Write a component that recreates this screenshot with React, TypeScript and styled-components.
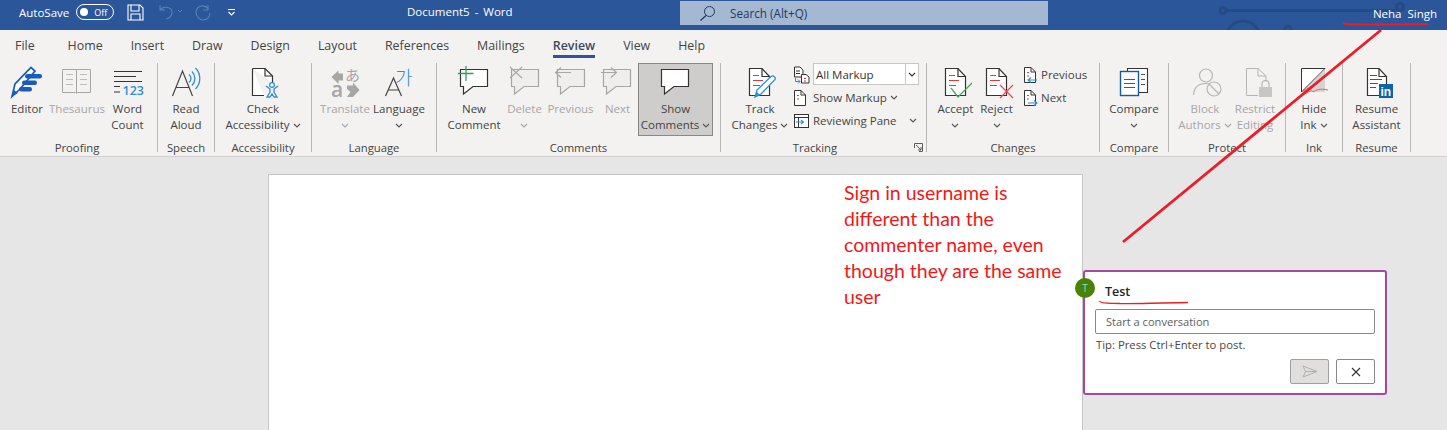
import React from "react";
import styled, { createGlobalStyle } from "styled-components";

const UI = `"Open Sans", "Noto Sans", "Liberation Sans", sans-serif`;
const INK = "#444";
const MUTED = "#a6a6a6";
const BLUE = "#2e8fd6";
const RED = "#ec1c28";

const Global = createGlobalStyle`
  html, body { margin: 0; padding: 0; background: #e6e6e6; }
  * { box-sizing: border-box; }
`;
const Shell = styled.div`
  position: relative; width: 1447px; height: 430px; overflow: hidden;
  display: flex; flex-direction: column; font-family: ${UI}; font-size: 11.5px; color: ${INK};
`;
const TitleBar = styled.header`
  height: 30px; flex: none; background: #2b579a; color: #fff; display: flex; position: relative; overflow: hidden;
`;
const Quick = styled.div`
  width: 407px; flex: none; display: flex; align-items: center; padding: 0 0 6px 19px; font-size: 11.5px;
`;
const Toggle = styled.div`
  width: 38px; height: 16px; margin-left: 7px; border: 1px solid #fff; border-radius: 8px; display: flex; align-items: center;
  padding: 0 6px 0 3px; justify-content: space-between; font-size: 9px;
  &::before { content: ""; width: 8px; height: 8px; border-radius: 50%; background: #fff; }
`;
const QuickIcon = styled.svg<{ $ml: number }>` margin-left: ${p => p.$ml}px; flex: none; `;
const DocTitle = styled.div` width: 273px; flex: none; padding-top: 4px; font-size: 11.5px; line-height: 16px; word-spacing: 2px; `;
const SearchBox = styled.div`
  width: 368px; height: 24px; margin-top: 1px; flex: none; background: #a5b8d1; color: #1f3864; display: flex; align-items: center;
  padding-left: 19px; gap: 14px; font-size: 11.7px;
`;
const UserName = styled.div`
  flex: 1; text-align: right; padding: 6px 10px 0 0; font-size: 11.5px; line-height: 16px; word-spacing: 3px; position: relative;
`;
const Circuit = styled.svg` position: absolute; left: 1200px; top: 0; `;
const Tabs = styled.nav`
  height: 30px; flex: none; background: #f3f2f1; display: flex; gap: 28px; padding: 7px 0 0 15px; font-size: 12.4px; line-height: 17px;
`;
const Tab = styled.div<{ $active?: boolean; $extra?: number }>`
  margin-right: ${p => p.$extra ?? 0}px; height: 21px; font-weight: ${p => (p.$active ? 600 : 400)};
  color: ${p => (p.$active ? "#3a4a60" : INK)}; border-bottom: ${p => (p.$active ? "3px solid #2b579a" : "none")};
`;
const Ribbon = styled.section`
  height: 97px; flex: none; background: #f3f2f1; border-bottom: 1px solid #d2d0ce; display: flex; padding-top: 3px;
`;
const Group = styled.div<{ $w: number }>`
  width: ${p => p.$w}px; flex: none; display: flex; flex-direction: column; position: relative;
`;
const Sep = styled.div` width: 1px; height: 89px; flex: none; background: #b9b7b5; `;
const GroupBody = styled.div<{ $pl?: number; $center?: boolean }>`
  height: 73px; display: flex; padding-left: ${p => p.$pl ?? 0}px; justify-content: ${p => (p.$center ? "center" : "flex-start")};
`;
const GroupLabel = styled.div<{ $pr?: number }>`
  margin-top: 4px; text-align: center; line-height: 16px; font-size: 11.3px; padding-right: ${p => p.$pr ?? 0}px;
`;
const Launcher = styled.svg` position: absolute; right: 3px; bottom: 4px; `;
const Big = styled.div<{ $w: number; $dim?: boolean; $on?: boolean; $ml?: number }>`
  width: ${p => p.$w}px; margin-left: ${p => p.$ml ?? 0}px; height: 73px; flex: none; display: flex; flex-direction: column; align-items: center;
  color: ${p => (p.$dim ? MUTED : INK)}; background: ${p => (p.$on ? "#cfcdcb" : "transparent")};
  border: ${p => (p.$on ? "1px solid #8a8886" : "none")}; padding-top: ${p => (p.$on ? 0 : 1)}px; white-space: nowrap;
`;
const IconSvg = styled.svg` flex: none; display: block; overflow: visible; `;
const Line = styled.div` height: 16px; line-height: 16px; display: flex; align-items: center; justify-content: center; gap: 3px; margin-top: 0; `;
const Lines = styled.div` padding-top: 1px; display: flex; flex-direction: column; `;
const Column = styled.div<{ $w: number; $ml: number }>` width: ${p => p.$w}px; margin-left: ${p => p.$ml}px; flex: none; display: flex; flex-direction: column; `;
const SmallRow = styled.div`
  height: 23px; display: flex; align-items: center; gap: 3px; white-space: nowrap; position: relative;
`;
const Combo = styled.div`
  width: 106px; height: 22px; background: #fff; border: 1px solid #c8c6c4; display: flex; align-items: center; padding-left: 2px; position: relative; color: #333;
  margin-top: -1px;
`;
const ComboDrop = styled.div`
  position: absolute; right: 0; top: 0; bottom: 0; width: 13px; border-left: 1px solid #c8c6c4; display: flex; align-items: center; justify-content: center;
`;
const FarChevron = styled.span` display: flex; margin-left: 9px; `;
const Main = styled.main` flex: 1; min-height: 0; display: flex; align-items: flex-start; padding: 17px 0 0 268px; `;
const Page = styled.article`
  width: 815px; height: 300px; background: #fff; border: 1px solid #c6c6c6; border-bottom: none; padding: 5px 0 0 575px; flex: none;
`;
const Note = styled.div`
  font-family: Lato, "Open Sans", "Liberation Sans", sans-serif; font-size: 19.5px; line-height: 26px; color: #f01818; white-space: nowrap;
`;
const Card = styled.aside`
  width: 304px; height: 125px; margin: 96px 0 0 0; flex: none; position: relative; background: #fff; border: 2px solid #a349a4; border-radius: 3px;
  padding: 10px 10px 0 10px; display: flex; flex-direction: column;
`;
const Avatar = styled.div`
  position: absolute; left: -10px; top: 6px; width: 20px; height: 20px; border-radius: 50%; background: #498205; color: #8fdcd6;
  font-size: 10px; line-height: 20px; text-align: center;
`;
const Author = styled.div` padding-left: 10px; font-size: 12.5px; font-weight: 600; line-height: 19px; color: #252423; `;
const Input = styled.div`
  margin-top: 8px; height: 25px; border: 1px solid #8a8886; border-radius: 2px; padding-left: 10px; line-height: 23px; font-size: 11.1px; color: #605e5c;
`;
const Tip = styled.div` margin-top: 3px; padding-left: 1px; line-height: 16px; font-size: 11.3px; color: #484644; `;
const Actions = styled.div` margin-top: 6px; display: flex; justify-content: flex-end; gap: 7px; `;
const ActionButton = styled.div<{ $off?: boolean }>`
  width: 39px; height: 25px; border: 1px solid ${p => (p.$off ? "#a19f9d" : "#8a8886")}; border-radius: 2px;
  background: ${p => (p.$off ? "#e1dfdd" : "#fff")}; display: flex; align-items: center; justify-content: center;
`;
const Ink = styled.svg` position: absolute; left: 0; top: 0; pointer-events: none; `;

const Chevron = ({ c = "#555" }: { c?: string }) => (
  <svg width="8" height="5" viewBox="0 0 8 5"><path d="M1 1l3 3 3-3" fill="none" stroke={c} strokeWidth="1.1" /></svg>
);

const Ico = ({ x, w, children }: { x: number; w: number; children: React.ReactNode }) => (
  <IconSvg viewBox={`${x} 64 ${w} 36`} width={w} height={36}>{children}</IconSvg>
);

const Doc = ({ x, stroke = "#333", r = 21, b = 96, fill = "#fff" }: { x: number; stroke?: string; r?: number; b?: number; fill?: string }) => (
  <>
    <path d={`M${x + .5} 68.5H${x + r - 8}L${x + r - .5} 76.5V${b - .5}H${x + .5}Z`} fill={fill} stroke={stroke} strokeWidth="1.2" />
    <path d={`M${x + r - 8} 68.5V76.5H${x + r - .5}`} fill="none" stroke={stroke} strokeWidth="1.2" />
  </>
);
const RedLines = ({ x }: { x: number }) => (
  <path d={`M${x + 4} 75.5h6M${x + 4} 80.5h10M${x + 4} 85.5h7`} stroke="#e0393e" strokeWidth="1.2" />
);
const Bubble = ({ x, stroke, fill }: { x: number; stroke: string; fill: string }) => (
  <path d={`M${x + .5} 69.5H${x + 27.5}V86.5H${x + 13}L${x + 3.5} 94V86.5H${x + .5}Z`} fill={fill} stroke={stroke} strokeWidth="1.2" />
);
const BigLabel = ({ a, b, chev, dim }: { a: string; b?: string; chev?: boolean; dim?: boolean }) => (
  <Lines>
    <Line>{a}</Line>
    <Line>{b}{chev && <Chevron c={dim ? MUTED : "#555"} />}</Line>
  </Lines>
);
const MiniDoc = ({ children, w = 15 }: { children?: React.ReactNode; w?: number }) => (
  <svg width={w} height="18" viewBox={`0 0 ${w} 18`} style={{ flex: "none" }}>
    <path d="M1.5 1.5H8L12.5 6V16.5H1.5Z" fill="#fff" stroke="#333" />
    <path d="M8 1.5V6H12.5" fill="none" stroke="#333" />
    <path d="M4 6.5h2M4 10h2" stroke="#e0393e" />
    {children}
  </svg>
);

export default function App() {
  return (
    <Shell>
      <Global />
      <TitleBar>
        <Quick>
          <span>AutoSave</span>
          <Toggle>Off</Toggle>
          <QuickIcon $ml={13} width="17" height="17" viewBox="0 0 17 17">
            <path d="M1 1H13L16 4V16H1Z M4 1V7H12V1 M4 16V10H13V16" fill="none" stroke="#fff" strokeWidth="1.1" />
          </QuickIcon>
          <QuickIcon $ml={13} width="26" height="17" viewBox="0 0 26 17">
            <path d="M3 1V6H8M3 6C6 2 14 2 15 8C15 11 13 14 9 15" fill="none" stroke="#5a80b8" strokeWidth="1.1" />
            <path d="M21 6l2 2 2-2" fill="none" stroke="#5a80b8" />
          </QuickIcon>
          <QuickIcon $ml={11} width="18" height="18" viewBox="0 0 18 18">
            <path d="M14 2V7H9M14 6C11 1 3 2 2 9C2 14 6 17 9 17C13 17 16 14 16 10" fill="none" stroke="#5a80b8" strokeWidth="1.1" />
          </QuickIcon>
          <QuickIcon $ml={15} width="10" height="9" viewBox="0 0 10 9">
            <path d="M1 1.5H8M1.5 4l3 3 3-3" fill="none" stroke="#fff" strokeWidth="1.1" />
          </QuickIcon>
        </Quick>
        <DocTitle>Document5 - Word</DocTitle>
        <SearchBox>
          <svg width="17" height="17" viewBox="0 0 17 17">
            <circle cx="10.5" cy="6.5" r="5" fill="none" stroke="#1f3864" />
            <path d="M7 10.5L1.5 15.5" stroke="#1f3864" strokeWidth="1.2" />
          </svg>
          <span>Search (Alt+Q)</span>
        </SearchBox>
        <Circuit width="247" height="30" viewBox="0 0 247 30">
          <g fill="none" stroke="#244b86" strokeWidth="3">
            <circle cx="23" cy="10.5" r="3" />
            <path d="M26 10.5H195" />
            <circle cx="200" cy="7" r="3.5" />
            <circle cx="43" cy="38" r="17" />
            <path d="M30 38H56" />
            <circle cx="88" cy="29" r="3" />
          </g>
        </Circuit>
        <UserName>Neha Singh</UserName>
      </TitleBar>
      <Tabs>
        <Tab $extra={5}>File</Tab>
        {["Home", "Insert", "Draw", "Design", "Layout", "References", "Mailings"].map(t => <Tab key={t}>{t}</Tab>)}
        <Tab $active>Review</Tab>
        <Tab>View</Tab>
        <Tab>Help</Tab>
      </Tabs>
      <Ribbon>
        <Group $w={157}>
          <GroupBody $pl={4}>
            <Big $w={46}>
              <Ico x={4} w={46}>
                <path d="M12 96.5L15 84L31 67.5L35 71L20 89L12 96.5Z" fill="#fff" stroke="#185abd" strokeWidth="1.7" />
                <path d="M12 96.5L14 90L18 93Z" fill="#185abd" />
                <rect x="25" y="74" width="17" height="4.5" rx="2.2" fill="#185abd" />
                <rect x="22" y="80.5" width="15" height="4.5" rx="2.2" fill="#185abd" />
                <rect x="19" y="87" width="13" height="4.5" rx="2.2" fill="#185abd" />
              </Ico>
              <BigLabel a="Editor" />
            </Big>
            <Big $w={54} $dim>
              <Ico x={50} w={54}>
                <path d="M62.5 69.5H76.5L77 70H76.5V92.5L76 93L75.5 92.5H62.5ZM76.5 69.5H90.5V92.5H77.5L76.5 93.5Z" fill="#f3f2f1" stroke="#a6a6a6" />
                <path d="M66 74.5h7M66 79.5h7M66 84.5h7M80 74.5h7M80 79.5h7M80 84.5h7" stroke="#bdbdbd" />
              </Ico>
              <BigLabel a="Thesaurus" />
            </Big>
            <Big $w={47}>
              <Ico x={104} w={47}>
                <path d="M114 71.5h28M114 76.5h22M114 81.5h28" stroke="#333" strokeWidth="1" />
                <path d="M114 86.5h6M114 92h6" stroke="#333" strokeWidth="1" />
                <text x="122.5" y="95" fontSize="12.5" fill={BLUE} fontFamily="Open Sans" fontWeight="600">123</text>
              </Ico>
              <BigLabel a="Word" b="Count" />
            </Big>
          </GroupBody>
          <GroupLabel $pr={3}>Proofing</GroupLabel>
        </Group>
        <Sep />
        <Group $w={56}>
          <GroupBody $center>
            <Big $w={56}>
              <Ico x={158} w={56}>
                <path d="M172.5 96L182.5 71L192.5 96M176 87.5H189" fill="none" stroke="#444" strokeWidth="1.2" />
                <path d="M189 74.5a5 5 0 0 1 0 8M192 71.5a10 10 0 0 1 0 14M195.5 68a15 15 0 0 1 0 21" fill="none" stroke={BLUE} strokeWidth="1.3" />
              </Ico>
              <BigLabel a="Read" b="Aloud" />
            </Big>
          </GroupBody>
          <GroupLabel>Speech</GroupLabel>
        </Group>
        <Sep />
        <Group $w={96}>
          <GroupBody $center>
            <Big $w={96}>
              <Ico x={215} w={96}>
                <path d="M252.5 68.5H265L272.5 76V83M264 95.5H252.5V68.5" fill="#fff" stroke="#333" strokeWidth="1.2" />
                <path d="M265 68.5V76H272.5" fill="none" stroke="#333" strokeWidth="1.2" />
                <circle cx="272" cy="85" r="2.4" fill="none" stroke={BLUE} strokeWidth="1.2" />
                <path d="M266 86L270 89V92L267 97H270L272 94L274 97H277L274 92V89L278 86" fill="none" stroke={BLUE} strokeWidth="1.3" />
              </Ico>
              <BigLabel a="Check" b="Accessibility" chev />
            </Big>
          </GroupBody>
          <GroupLabel>Accessibility</GroupLabel>
        </Group>
        <Sep />
        <Group $w={124}>
          <GroupBody $pl={8}>
            <Big $w={50} $dim>
              <Ico x={320} w={50}>
                <path d="M343 73.5V80.5H338.5V84L331.5 77L338.5 70.5V73.5Z" fill="#a6a6a6" />
                <text x="345" y="81" fontSize="15" fill="#a6a6a6" fontFamily="Noto Sans CJK JP">あ</text>
                <text x="331" y="96.5" fontSize="21" fontWeight="600" fill="#a6a6a6" fontFamily="Open Sans">a</text>
                <path d="M347 85.5H353V82.5L359.5 90L353 97H347L350.5 92L347 89Z" fill="#a6a6a6" />
              </Ico>
              <BigLabel a="Translate" b="" chev dim />
            </Big>
            <Big $w={58}>
              <Ico x={371} w={58}>
                <path d="M386.5 96L394.5 78L402.5 96M389.5 90H399.5" fill="none" stroke="#444" strokeWidth="1.2" />
                <text x="396" y="85" fontSize="19" fill={BLUE} fontFamily="Noto Sans CJK KR" fontWeight="300">가</text>
              </Ico>
              <BigLabel a="Language" b="" chev />
            </Big>
          </GroupBody>
          <GroupLabel>Language</GroupLabel>
        </Group>
        <Sep />
        <Group $w={283}>
          <GroupBody $pl={12}>
            <Big $w={50}>
              <Ico x={449} w={50}>
                <Bubble x={460} stroke="#333" fill="#fff" />
                <path d="M466 66V81M458 73.5H473.5" stroke="#2f9e5b" strokeWidth="1.3" />
              </Ico>
              <BigLabel a="New" b="Comment" />
            </Big>
            <Big $w={51} $dim>
              <Ico x={499} w={51}>
                <Bubble x={511} stroke="#a6a6a6" fill="#efeeed" />
                <path d="M510 67L522 78M522 67L510 78" stroke="#a6a6a6" strokeWidth="1.1" />
              </Ico>
              <BigLabel a="Delete" b="" chev dim />
            </Big>
            <Big $w={41} $dim>
              <Ico x={550} w={41}>
                <Bubble x={557} stroke="#a6a6a6" fill="#efeeed" />
                <path d="M556 72.5H571M561 67.5L555.5 72.5L561 77.5" fill="none" stroke="#a6a6a6" strokeWidth="1.1" />
              </Ico>
              <BigLabel a="Previous" />
            </Big>
            <Big $w={41} $ml={6} $dim>
              <Ico x={597} w={41}>
                <Bubble x={603} stroke="#a6a6a6" fill="#efeeed" />
                <path d="M601 72.5H616M611 67.5L616.5 72.5L611 77.5" fill="none" stroke="#a6a6a6" strokeWidth="1.1" />
              </Ico>
              <BigLabel a="Next" />
            </Big>
            <Big $w={75} $on>
              <Ico x={639} w={73}>
                <Bubble x={661} stroke="#333" fill="#fff" />
              </Ico>
              <BigLabel a="Show" b="Comments" chev />
            </Big>
          </GroupBody>
          <GroupLabel>Comments</GroupLabel>
        </Group>
        <Sep />
        <Group $w={205}>
          <GroupBody $pl={8}>
            <Big $w={62}>
              <Ico x={729} w={62}>
                <Doc x={749} />
                <RedLines x={749} />
                <path d="M755 97L757 90L771 76.5C773 75 776 77 775 79.5L761 94Z" fill="#fff" stroke={BLUE} strokeWidth="1.3" />
                <path d="M755 97L756.5 91.5L760 95Z" fill={BLUE} />
              </Ico>
              <BigLabel a="Track" b="Changes" chev />
            </Big>
            <Column $w={132} $ml={2}>
              <SmallRow>
                <svg width="17" height="18" viewBox="0 0 17 18" style={{ flex: "none" }}>
                  <path d="M1.5 1H7L10 4V11H1.5Z" fill="#fff" stroke="#333" />
                  <path d="M3 5h4M3 7.5h4" stroke="#333" />
                  <path d="M8.5 8.5H13L16 11V17H8.5Z" fill="#fff" stroke="#333" />
                  <path d="M11 12.5h2M11 15h2" stroke="#e0393e" />
                  <path d="M2.5 12V15.5H7M5 13.5l2 2-2 2" fill="none" stroke={BLUE} />
                </svg>
                <Combo>All Markup<ComboDrop><Chevron c="#333" /></ComboDrop></Combo>
              </SmallRow>
              <SmallRow>
                <MiniDoc w={17} />
                <span>Show Markup</span>
                <Chevron />
              </SmallRow>
              <SmallRow>
                <svg width="17" height="16" viewBox="0 0 17 16" style={{ flex: "none" }}>
                  <rect x="1.5" y="1.5" width="14" height="13" fill="#fff" stroke="#333" />
                  <path d="M1.5 4.5h14M5.5 4.5v10" stroke="#333" />
                  <path d="M3 9h7M8 7l2.5 2L8 11" fill="none" stroke={BLUE} strokeWidth="1.1" />
                </svg>
                <span>Reviewing Pane</span>
                <FarChevron><Chevron /></FarChevron>
              </SmallRow>
            </Column>
          </GroupBody>
          <GroupLabel $pr={17}>Tracking</GroupLabel>
          <Launcher width="9" height="9" viewBox="0 0 9 9">
            <path d="M.5 5V.5H8.5V8.5H5M2 2L7 7M7 4V7H4" fill="none" stroke="#605e5c" />
          </Launcher>
        </Group>
        <Sep />
        <Group $w={172}>
          <GroupBody $pl={8}>
            <Big $w={41}>
              <Ico x={935} w={41}>
                <Doc x={945} />
                <RedLines x={945} />
                <path d="M951 88L958 97L972 83" fill="none" stroke="#4aa564" strokeWidth="1.3" />
              </Ico>
              <BigLabel a="Accept" b="" chev />
            </Big>
            <Big $w={41}>
              <Ico x={976} w={41}>
                <Doc x={986} />
                <RedLines x={986} />
                <path d="M1000 85L1013 98M1013 85L1000 98" stroke="#ee4a4a" strokeWidth="1.3" />
              </Ico>
              <BigLabel a="Reject" b="" chev />
            </Big>
            <Column $w={68} $ml={6}>
              <SmallRow>
                <MiniDoc>
                  <path d="M5 14H14M8 11.5L5 14L8 16.5" fill="none" stroke={BLUE} strokeWidth="1.1" />
                </MiniDoc>
                <span>Previous</span>
              </SmallRow>
              <SmallRow>
                <MiniDoc>
                  <path d="M5 14H14M11 11.5L14 14L11 16.5" fill="none" stroke={BLUE} strokeWidth="1.1" />
                </MiniDoc>
                <span>Next</span>
              </SmallRow>
            </Column>
          </GroupBody>
          <GroupLabel>Changes</GroupLabel>
        </Group>
        <Sep />
        <Group $w={68}>
          <GroupBody $center>
            <Big $w={68}>
              <Ico x={1100} w={68}>
                <path d="M1127.5 68.5H1147.5V92.5H1127.5Z" fill="#fff" stroke="#333" strokeWidth="1.1" />
                <path d="M1141 74.5h4M1141 79.5h4M1141 84.5h4" stroke="#555" />
                <rect x="1120.5" y="71.5" width="18" height="24" fill="#fff" stroke="#185a9d" strokeWidth="1.4" />
                <path d="M1124 79.5h11M1124 83.5h11M1124 87.5h11" stroke="#555" />
              </Ico>
              <BigLabel a="Compare" b="" chev />
            </Big>
          </GroupBody>
          <GroupLabel>Compare</GroupLabel>
        </Group>
        <Sep />
        <Group $w={116}>
          <GroupBody $pl={11}>
            <Big $w={50} $dim>
              <Ico x={1180} w={50}>
                <circle cx="1206" cy="75.5" r="6.5" fill="none" stroke="#b5b5b5" strokeWidth="1.2" />
                <path d="M1193.5 95C1194 87 1199 83.5 1206 83.5C1208 83.5 1210 84 1211 85" fill="none" stroke="#b5b5b5" strokeWidth="1.2" />
                <circle cx="1214" cy="89" r="7" fill="#f3f2f1" stroke="#b5b5b5" strokeWidth="1.2" />
                <path d="M1209 84L1219 94" stroke="#b5b5b5" strokeWidth="1.2" />
              </Ico>
              <BigLabel a="Block" b="Authors" chev dim />
            </Big>
            <Big $w={50} $dim>
              <Ico x={1230} w={50}>
                <path d="M1246.5 68.5H1258L1266 76V82M1258 95.5H1246.5V68.5" fill="none" stroke="#b5b5b5" />
                <path d="M1258 68.5V76H1266" fill="none" stroke="#b5b5b5" />
                <rect x="1259" y="87" width="13" height="10" fill="#c8c6c4" />
                <path d="M1262 87V84a3.5 3.5 0 0 1 7 0V87" fill="none" stroke="#b5b5b5" strokeWidth="1.2" />
              </Ico>
              <BigLabel a="Restrict" b="Editing" />
            </Big>
          </GroupBody>
          <GroupLabel>Protect</GroupLabel>
        </Group>
        <Sep />
        <Group $w={56}>
          <GroupBody $center>
            <Big $w={56}>
              <Ico x={1286} w={56}>
                <path d="M1301.5 92V68.5H1325L1301.5 92Z" fill="#fff" stroke="#333" strokeWidth="1" />
                <path d="M1325 69L1303 92H1325Z" fill="#d6d4d2" />
                <path d="M1302 92C1308 88 1316 84 1321 80M1302 96C1310 90 1312 90 1313 92C1316 90 1320 88 1328 90" fill="none" stroke="#ee5a5a" strokeWidth="1" />
              </Ico>
              <BigLabel a="Hide" b="Ink" chev />
            </Big>
          </GroupBody>
          <GroupLabel>Ink</GroupLabel>
        </Group>
        <Sep />
        <Group $w={67}>
          <GroupBody $center>
            <Big $w={67}>
              <Ico x={1343} w={67}>
                <Doc x={1367} r={20} />
                <path d="M1370 75.5h7M1370 79.5h12M1370 83.5h8M1370 87.5h6" stroke="#555" />
                <rect x="1379" y="84" width="14" height="14" fill="#0a66a8" />
                <text x="1380.5" y="96" fontSize="12" fontWeight="700" fill="#fff" fontFamily="Liberation Sans">in</text>
              </Ico>
              <BigLabel a="Resume" b="Assistant" />
            </Big>
          </GroupBody>
          <GroupLabel>Resume</GroupLabel>
        </Group>
        <Sep />
      </Ribbon>
      <Main>
        <Page>
          <Note>
            Sign in username is<br />
            different than the<br />
            commenter name, even<br />
            though they are the same<br />
            user
          </Note>
        </Page>
        <Card>
          <Avatar>T</Avatar>
          <Author>Test</Author>
          <Input>Start a conversation</Input>
          <Tip>Tip: Press Ctrl+Enter to post.</Tip>
          <Actions>
            <ActionButton $off>
              <svg width="16" height="13" viewBox="0 0 16 13"><path d="M1 1L15 6.5L1 12L3.5 6.5ZM3.5 6.5H15" fill="none" stroke="#b3b0ad" /></svg>
            </ActionButton>
            <ActionButton>
              <svg width="10" height="10" viewBox="0 0 10 10"><path d="M1 1L9 9M9 1L1 9" stroke="#333" strokeWidth="1.1" /></svg>
            </ActionButton>
          </Actions>
        </Card>
      </Main>
      <Ink width="1447" height="430" viewBox="0 0 1447 430">
        <path d="M1343 23.5C1350 25 1400 24.5 1428 24" fill="none" stroke={RED} strokeWidth="2" />
        <path d="M1381 30L1123 242" fill="none" stroke={RED} strokeWidth="2.8" />
        <path d="M1099 301C1101 304 1110 303 1120 303.5C1140 304 1170 302.5 1188 302.5" fill="none" stroke={RED} strokeWidth="1.3" />
      </Ink>
    </Shell>
  );
}
